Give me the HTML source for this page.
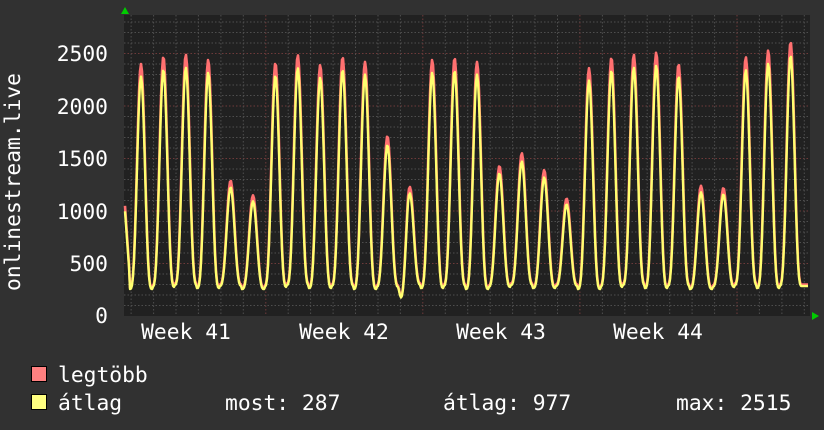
<!DOCTYPE html>
<html><head><meta charset="utf-8"><style>
html,body{margin:0;padding:0;background:#313131;}
body{width:824px;height:430px;overflow:hidden;position:relative;font-family:"DejaVu Sans Mono","Liberation Mono",monospace;color:#fff;}
svg{position:absolute;left:0;top:0}
</style></head><body>
<svg id="g" width="824" height="430" xmlns="http://www.w3.org/2000/svg" font-family="DejaVu Sans Mono, Liberation Mono, monospace" font-size="21.3">
<rect x="0" y="0" width="824" height="430" fill="#313131"/>
<rect x="124" y="15" width="686" height="301" fill="#212121"/>
<g id="grid"></g>
<path id="red" fill="none" stroke="#ff7070" stroke-width="2.6" stroke-linejoin="round"/>
<path id="yel" fill="none" stroke="#ffff70" stroke-width="2.4" stroke-linejoin="round"/>
<polygon points="121,14 125,7 129,14" fill="#00cc00"/>
<polygon points="812,312 819,316 812,320" fill="#00cc00"/>
<g fill="#fff" text-anchor="end">
<text x="108" y="61">2500</text>
<text x="108" y="114">2000</text>
<text x="108" y="166">1500</text>
<text x="108" y="219">1000</text>
<text x="108" y="271">500</text>
<text x="108" y="323">0</text>
</g>
<g fill="#fff" text-anchor="middle">
<text x="186" y="339">Week 41</text>
<text x="344" y="339">Week 42</text>
<text x="501" y="339">Week 43</text>
<text x="658" y="339">Week 44</text>
</g>
<text transform="translate(20,182) rotate(-90)" text-anchor="middle" fill="#fff">onlinestream.live</text>
<rect x="31.5" y="366.5" width="15" height="15" fill="#ff8080" stroke="#000"/>
<rect x="31.5" y="394.5" width="15" height="15" fill="#ffff80" stroke="#000"/>
<g fill="#fff">
<text x="58" y="382">legtöbb</text>
<text x="58" y="410">átlag</text>
<text x="225" y="410">most: 287</text>
<text x="443" y="410">átlag: 977</text>
<text x="676" y="410">max: 2515</text>
</g>
</svg>
<script>
(function(){
var g=document.getElementById('grid'),s="";
function Y(v){return 316-v*0.105;}
for(var v=100;v<=2800;v+=100){var y=Y(v);if(y<15)break;var maj=(v%500==0);
s+='<line x1="124" x2="810" y1="'+y.toFixed(1)+'" y2="'+y.toFixed(1)+'" stroke="'+(maj?'#6e3a3a':'#4e4e4e')+'" stroke-dasharray="1.5,2" stroke-width="1"/>';}
for(var k=-30;k<40;k++){var x=737-22.44*k;if(x<125||x>809)continue;var maj=(k%7==0);
s+='<line y1="15" y2="316" x1="'+x.toFixed(1)+'" x2="'+x.toFixed(1)+'" stroke="'+(maj?'#6e3a3a':'#4e4e4e')+'" stroke-dasharray="1.5,2" stroke-width="1"/>';}
g.innerHTML=s;
var peaks=[2400,2470,2490,2440,1290,1150,2410,2485,2390,2466,2420,1714,1230,2440,2457,2420,1430,1550,1390,1120,2360,2460,2490,2510,2400,1240,1220,2466,2530,2610];
var P=22.4,x0=141;
function val(x){
 if(x<130){return 1050-(x-125)*140;}
 var i=Math.round((x-x0)/P);if(i>29)i=29;var ph=(x-x0-i*P)/P;
 var tr=270+((i*37)%5)*10;
 var pk=peaks[Math.max(0,i)];
 var f=(ph>0.5)?0:Math.pow((Math.cos(2*Math.PI*ph)+1)/2,1.7);
 var v=tr+(pk-tr)*f;
 if(x>=398&&x<=408){v-=180*Math.sin(Math.PI*(x-398)/10);}
 return v;
}
var r="",yl="";
for(var x=125;x<=808;x++){var v=val(x);var c=(x==125?'M':'L');
 r+=c+x+','+Y(v).toFixed(1);yl+=c+x+','+Y(v*0.95).toFixed(1);}
document.getElementById('red').setAttribute('d',r);
document.getElementById('yel').setAttribute('d',yl);
})();
</script>
</body></html>
